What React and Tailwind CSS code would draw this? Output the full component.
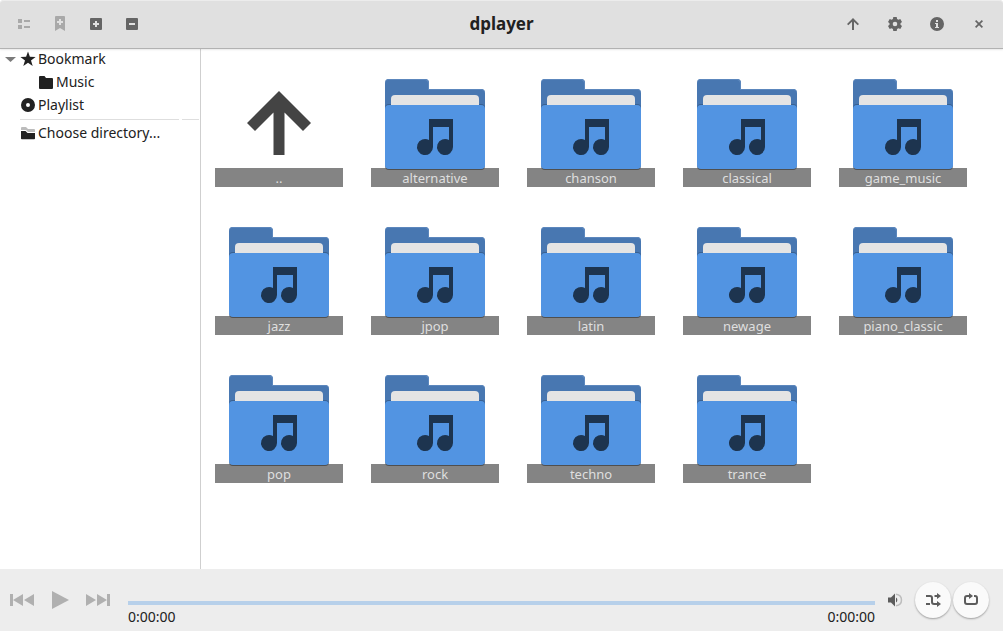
import React from "react";

const folders = [
  "alternative", "chanson", "classical", "game_music", "jazz", "jpop", "latin",
  "newage", "piano_classic", "pop", "rock", "techno", "trance",
];

function Icon({ children, className = "" }) {
  return (
    <svg viewBox="0 0 16 16" className={`size-4 shrink-0 ${className}`} fill="currentColor" aria-hidden="true">
      {children}
    </svg>
  );
}

function BarButton({ label, wide, disabled, children }) {
  return (
    <button
      type="button"
      aria-label={label}
      disabled={disabled}
      className={`flex h-9 items-center justify-center ${wide ? "w-[42px]" : "w-9"} ${disabled ? "text-[#a9a9a9]" : "text-[#656565]"}`}
    >
      <Icon>{children}</Icon>
    </button>
  );
}

function Header() {
  return (
    <header className="relative z-10 grid h-12 shrink-0 grid-cols-[1fr_auto_1fr] items-center rounded-t-sm bg-[#e0e0e0] px-[3px] shadow-[inset_0_1px_0_#ececec,0_1px_0_#b2b2b2,0_2px_2px_#00000018]">
      <div className="flex pl-[3px]">
        <BarButton label="List view" disabled>
          <path d="M2 3h4v4H2zM2 9h4v4H2zM8 4h6v2H8zM8 10h6v2H8z" />
        </BarButton>
        <BarButton label="Add bookmark" disabled>
          <path fillRule="evenodd" d="M4 0h8a1 1 0 0 1 1 1v14l-5-3-5 3V1a1 1 0 0 1 1-1zM7 3v2H5v2h2v2h2V7h2V5H9V3z" />
        </BarButton>
        <BarButton label="Add">
          <path fillRule="evenodd" d="M3 2h10a1 1 0 0 1 1 1v10a1 1 0 0 1-1 1H3a1 1 0 0 1-1-1V3a1 1 0 0 1 1-1zM7 5v2H5v2h2v2h2V9h2V7H9V5z" />
        </BarButton>
        <BarButton label="Remove">
          <path fillRule="evenodd" d="M3 2h10a1 1 0 0 1 1 1v10a1 1 0 0 1-1 1H3a1 1 0 0 1-1-1V3a1 1 0 0 1 1-1zM5 7v2h6V7z" />
        </BarButton>
      </div>
      <h1 className="text-[17px] leading-7 font-bold text-[#212121]">dplayer</h1>
      <div className="flex justify-end">
        <BarButton label="Up" wide>
          <path d="M8 2 14 8l-1.300 1.300L9 5.700V14H7V5.700L3.300 9.300 2 8z" />
        </BarButton>
        <BarButton label="Settings" wide>
          <path fillRule="evenodd" d="M6.300 1h3.400l.4 2 1.300.7 1.900-.7 1.700 3L13.500 7.300v1.400L15 10l-1.700 3-1.900-.7-1.300.7-.4 2H6.300l-.4-2-1.300-.7-1.900.7L1 10l1.500-1.300V7.300L1 6l1.700-3 1.900.7L5.900 3zM8 5.700a2.300 2.300 0 1 0 0 4.600 2.300 2.300 0 0 0 0-4.600z" />
        </BarButton>
        <BarButton label="About" wide>
          <path fillRule="evenodd" d="M8 1a7 7 0 1 1 0 14A7 7 0 0 1 8 1zM7 4v2h2V4zM6 7v1h1v3H6v1h4v-1H9V7z" />
        </BarButton>
        <BarButton label="Close" wide>
          <path d="m4 5.200 1.200-1.200L8 6.800 10.800 4 12 5.200 9.200 8l2.800 2.800-1.200 1.200L8 9.200 5.200 12 4 10.800 6.800 8z" />
        </BarButton>
      </div>
    </header>
  );
}

function SideRow({ label, nested, expandable, children }) {
  return (
    <button type="button" className={`flex h-[23px] w-full items-center gap-0.5 pb-0.5 text-left ${nested ? "pl-[38px]" : "pl-5"}`}>
      {expandable && (
        <Icon className="-ml-[18px] text-[#7b7b7b]">
          <path d="M3 6h11L8.500 11z" />
        </Icon>
      )}
      <Icon>{children}</Icon>
      <span className="whitespace-nowrap">{label}</span>
    </button>
  );
}

function Sidebar() {
  return (
    <nav className="w-[201px] shrink-0 border-r border-[#cfcfcf] text-sm text-[#212121]">
      <SideRow label="Bookmark" expandable>
        <path d="m8 .5 1.900 5.300 5.700.1L11 9.400l1.700 5.600L8 11.700 3.300 15 5 9.400.4 5.900l5.700-.1z" />
      </SideRow>
      <SideRow label="Music" nested>
        <path d="M2 2h4.500L8 4h6a1 1 0 0 1 1 1v9a1 1 0 0 1-1 1H2a1 1 0 0 1-1-1V3a1 1 0 0 1 1-1z" />
      </SideRow>
      <SideRow label="Playlist">
        <path fillRule="evenodd" d="M8 1a7 7 0 1 1 0 14A7 7 0 0 1 8 1zM8 6a2 2 0 1 0 0 4 2 2 0 0 0 0-4z" />
      </SideRow>
      <div className="flex h-[5px] items-center gap-[3px] pl-5">
        <div className="h-px flex-1 bg-[#dedede]" />
        <div className="mr-px h-px w-[17px] bg-[#dedede]" />
      </div>
      <SideRow label="Choose directory...">
        <path fill="#bcbcbc" d="M1 3a1 1 0 0 1 1-1h4l2 2h6a1 1 0 0 1 1 1v2H8L6 5H1z" />
        <path d="M1 6h4.500l2 2H15v5.500a.8.8 0 0 1-.8.800H1.800a.8.8 0 0 1-.8-.8z" />
      </SideRow>
    </nav>
  );
}

function FolderArt() {
  return (
    <svg viewBox="0 0 128 128" className="col-start-1 row-start-1 size-32" aria-hidden="true">
      <path fill="#2b2b2b" opacity=".6" d="M14 100h100v7a4 4 0 0 1-4 4H18a4 4 0 0 1-4-4z" />
      <path fill="#4877b1" d="M18 20h36a4 4 0 0 1 4 4v6h52a4 4 0 0 1 4 4v50H14V24a4 4 0 0 1 4-4z" />
      <path fill="#5c87bd" d="M18 20h36a4 4 0 0 1 4 4v6h52a4 4 0 0 1 4 4v1a4 4 0 0 0-4-4H57v-6a4 4 0 0 0-3-4H18a4 4 0 0 0-4 4v-1a4 4 0 0 1 4-4z" />
      <path fill="#39608f" d="M14 49a4 4 0 0 1 4-4h92a4 4 0 0 1 4 4v4H14z" />
      <path fill="#e4e4e4" d="M24 36h80a4 4 0 0 1 4 4v20H20V40a4 4 0 0 1 4-4z" />
      <rect x="14" y="46" width="100" height="64" rx="4" fill="#5294e2" />
      <path fill="#1d344f" d="M58 60h24v28a8 8 0 1 1-4-6.930V68H62v20a8 8 0 1 1-4-6.930z" />
    </svg>
  );
}

function Tile({ name, children }) {
  return (
    <button type="button" className="grid size-32">
      <span className="col-start-1 row-start-1 h-[19px] self-end bg-[#848484]" />
      {children}
      <span className="z-10 col-start-1 row-start-1 h-[19px] self-end text-[13px] leading-[21px] text-[#dfdfdf]">{name}</span>
    </button>
  );
}

function Library() {
  return (
    <main className="grid flex-1 grid-cols-[repeat(auto-fill,128px)] content-start gap-x-7 gap-y-5 overflow-auto px-3.5 pt-[11px]">
      <Tile name="..">
        <svg viewBox="0 0 128 128" className="col-start-1 row-start-1 size-32" aria-hidden="true">
          <path fill="#444" d="M64 32 96 64l-8 8-18.500-18.500V96h-11V53.500L40 72l-8-8z" />
        </svg>
      </Tile>
      {folders.map((name) => (
        <Tile key={name} name={name}>
          <FolderArt />
        </Tile>
      ))}
    </main>
  );
}

function Transport({ label, children }) {
  return (
    <button type="button" aria-label={label} disabled className="flex h-9 w-[38px] items-center justify-center text-[#b0b0b0]">
      <svg viewBox="0 0 24 24" className="size-6" fill="currentColor" aria-hidden="true">{children}</svg>
    </button>
  );
}

function RoundButton({ label, children }) {
  return (
    <button type="button" aria-label={label} className="flex size-9 items-center justify-center rounded-full bg-[#fafafa] text-[#5c5c5c] shadow-[0_1px_2px_#00000055]">
      <Icon>{children}</Icon>
    </button>
  );
}

function Player() {
  return (
    <footer className="flex h-[62px] shrink-0 items-center bg-[#ededed] pr-3.5 pl-[3px]">
      <Transport label="Previous">
        <path d="M0 6h3v12H0zM13 6v12L3 12zM24 6v12l-10-6z" />
      </Transport>
      <Transport label="Play">
        <path d="M4 3v18l17-9z" />
      </Transport>
      <Transport label="Next">
        <path d="M0 6v12l10-6zM11 6v12l10-6zM21 6h3v12h-3z" />
      </Transport>
      <div className="ml-[11px] flex flex-1 flex-col gap-0.5 pt-7">
        <input
          type="range"
          aria-label="Position"
          min="0"
          max="100"
          defaultValue="0"
          disabled
          className="block h-1 w-full appearance-none bg-[#b7d0ea] [&::-webkit-slider-thumb]:size-0 [&::-webkit-slider-thumb]:appearance-none"
        />
        <div className="flex justify-between text-sm text-[#212121]">
          <span>0:00:00</span>
          <span>0:00:00</span>
        </div>
      </div>
      <button type="button" aria-label="Volume" className="flex h-9 w-10 items-center justify-center text-[#5c5c5c]">
        <Icon>
          <path d="M1 5.500h3L8 1.500v13l-4-4H1z" />
          <path d="M9 5.500a3 3 0 0 1 0 5z" />
          <path fill="none" stroke="#bdbdbd" strokeWidth="1.500" d="M9 2.200c7.300 1 7.300 10.600 0 11.600" />
        </Icon>
      </button>
      <div className="flex gap-0.5">
        <RoundButton label="Shuffle">
          <path fill="none" stroke="currentColor" strokeWidth="2" d="M1 4h4q2 0 2 2v4q0 2 2 2h4M1 12h4M9.500 4H13" />
          <path d="m12 1 4 3-4 3zM12 9l4 3-4 3z" />
        </RoundButton>
        <RoundButton label="Repeat">
          <path fill="none" stroke="currentColor" strokeWidth="2" d="M7 4H4Q2 4 2 6v4q0 2 2 2h8q2 0 2-2V6q0-2-2-2h-1" />
          <path d="m6 1 4 3-4 3z" />
        </RoundButton>
      </div>
    </footer>
  );
}

export default function App() {
  return (
    <div className="flex h-screen flex-col bg-white font-['Noto_Sans',sans-serif]">
      <Header />
      <div className="flex min-h-0 flex-1">
        <Sidebar />
        <Library />
      </div>
      <Player />
    </div>
  );
}
